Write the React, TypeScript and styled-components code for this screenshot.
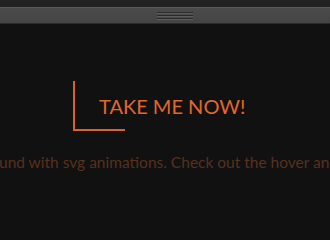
import React from 'react';
import styled, {createGlobalStyle} from 'styled-components';

const GlobalStyle = createGlobalStyle`
  html, body {
    margin: 0;
    padding: 0;
    background: #111111;
    overflow: hidden;
  }
  body {
    font-family: Lato, "Open Sans", sans-serif;
  }
`;

const Page = styled.div`
  width: 330px;
  height: 208px;
  display: flex;
  flex-direction: column;
  background: #111111;
  overflow: hidden;
`;

const TopStrip = styled.div`
  height: 7px;
  background: #222222;
  border-bottom: 1px solid #5a5a5a;
`;

const ResizeBar = styled.div`
  height: 15px;
  background: linear-gradient(#4b4b4b, #444444);
  border-bottom: 1px solid #2a2a2a;
  display: flex;
  align-items: center;
  justify-content: center;
`;

const Grip = styled.div`
  width: 36px;
  height: 7px;
  display: flex;
  flex-direction: column;
  justify-content: space-between;
  margin-left: 20px;

  & span {
    display: block;
    height: 1px;
    background: #2c2c2c;
    box-shadow: 0 1px 0 #5c5c5c;
  }
`;

const Stage = styled.div`
  flex: 1;
  display: flex;
  flex-direction: column;
  align-items: flex-start;
  overflow: hidden;
`;

const Button = styled.a`
  position: relative;
  margin: 57px 0 0 73px;
  height: 50px;
  padding: 0 26px;
  display: flex;
  align-items: center;
  color: #e0672d;
  font-size: 20px;
  text-decoration: none;
  cursor: pointer;
`;

const Corner = styled.span`
  position: absolute;
  left: 0;
  top: 0;
  width: 50px;
  height: 48px;
  border-left: 2px solid #d9622b;
  border-bottom: 2px solid #d9622b;
`;

const Subtitle = styled.p`
  margin: 22px 0 0 -1px;
  white-space: nowrap;
  color: #57301f;
  font-size: 15.5px;
`;

export default function App() {
    return (
        <Page>
            <GlobalStyle/>
            <TopStrip/>
            <ResizeBar>
                <Grip>
                    <span/>
                    <span/>
                    <span/>
                </Grip>
            </ResizeBar>
            <Stage>
                <Button>
                    <Corner/>
                    TAKE ME NOW!
                </Button>
                <Subtitle>und with svg animations. Check out the hover and click effects.</Subtitle>
            </Stage>
        </Page>
    );
}
